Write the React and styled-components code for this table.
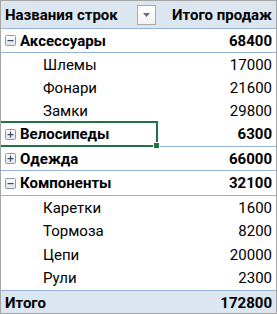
import styled, { createGlobalStyle } from 'styled-components';

const Global = createGlobalStyle`
  html, body {
    margin: 0;
    padding: 0;
    background: #fff;
  }
`;

const Sheet = styled.div`
  width: 277px;
  height: 314px;
  box-sizing: border-box;
  border: 1px solid #a6a6a6;
  font-family: Roboto, 'Noto Sans', sans-serif;
  font-size: 15px;
  color: #000;
  display: flex;
  flex-direction: column;
  overflow: hidden;
`;

const Row = styled.div`
  display: grid;
  grid-template-columns: 156px 1fr;
  height: ${(p) => p.$h}px;
  flex-shrink: 0;
  box-sizing: border-box;
  background: ${(p) => (p.$fill ? '#dce6f1' : '#fff')};
  border-top: ${(p) => (p.$lineTop ? '1px solid #95b3d7' : 'none')};
  border-bottom: ${(p) => (p.$line ? '1px solid #95b3d7' : 'none')};
  font-weight: ${(p) => (p.$bold ? 700 : 400)};
`;

const Label = styled.div`
  position: relative;
  display: flex;
  align-items: center;
  gap: 4px;
  padding-left: ${(p) => p.$indent}px;
  white-space: nowrap;
`;

const Value = styled.div`
  display: flex;
  align-items: center;
  justify-content: flex-end;
  padding-right: 4px;
  white-space: nowrap;
`;

const HeaderLabel = styled(Label)`
  justify-content: space-between;
  padding-right: 1px;
`;

const DropButton = styled.div`
  width: 19px;
  height: 20px;
  box-sizing: border-box;
  border: 1px solid #ababab;
  background: linear-gradient(#ffffff, #f2f2f2);
  display: flex;
  align-items: center;
  justify-content: center;
`;

const Selection = styled.div`
  position: absolute;
  left: -2px;
  top: -1px;
  right: -1px;
  bottom: -1px;
  border: 2px solid #217346;
  pointer-events: none;
`;

const Handle = styled.div`
  position: absolute;
  right: -4px;
  bottom: -4px;
  width: 5px;
  height: 5px;
  background: #217346;
  border: 1px solid #fff;
`;

const Toggle = ({ open }) => (
  <svg width="11" height="11" viewBox="0 0 11 11">
    <defs>
      <linearGradient id={open ? 'tg1' : 'tg2'} x1="0" y1="0" x2="0" y2="1">
        <stop offset="0" stopColor="#ffffff" />
        <stop offset="1" stopColor="#dde3ec" />
      </linearGradient>
    </defs>
    <rect x="0.5" y="0.5" width="10" height="10" rx="1" fill={`url(#${open ? 'tg1' : 'tg2'})`} stroke="#8d9aae" />
    <rect x="2.5" y="5" width="6" height="1.2" fill="#3c4b62" />
    {!open && <rect x="4.9" y="2.6" width="1.2" height="6" fill="#3c4b62" />}
  </svg>
);

const rows = [
  { name: 'Аксессуары', value: 68400, group: true, open: true, h: 24 },
  { name: 'Шлемы', value: 17000, h: 23 },
  { name: 'Фонари', value: 21600, h: 23 },
  { name: 'Замки', value: 29800, h: 23 },
  { name: 'Велосипеды', value: 6300, group: true, open: false, h: 25, selected: true },
  { name: 'Одежда', value: 66000, group: true, open: false, h: 24 },
  { name: 'Компоненты', value: 32100, group: true, open: true, h: 25 },
  { name: 'Каретки', value: 1600, h: 23 },
  { name: 'Тормоза', value: 8200, h: 24 },
  { name: 'Цепи', value: 20000, h: 23 },
  { name: 'Рули', value: 2300, h: 24 },
];

export default function App() {
  return (
    <>
      <Global />
      <Sheet>
        <Row $h={28} $fill $bold $line>
          <HeaderLabel $indent={4}>
            Названия строк
            <DropButton>
              <svg width="7" height="4" viewBox="0 0 7 4">
                <path d="M0 0 H7 L3.5 4 Z" fill="#6d6d6d" />
              </svg>
            </DropButton>
          </HeaderLabel>
          <Value>Итого продаж</Value>
        </Row>
        {rows.map((r) => (
          <Row key={r.name} $h={r.h} $bold={r.group} $line={r.group}>
            <Label $indent={r.group ? 4 : 42}>
              {r.group && <Toggle open={r.open} />}
              {r.name}
              {r.selected && (
                <Selection>
                  <Handle />
                </Selection>
              )}
            </Label>
            <Value>{r.value}</Value>
          </Row>
        ))}
        <Row $h={24} $fill $bold $lineTop>
          <Label $indent={4}>Итого</Label>
          <Value>172800</Value>
        </Row>
      </Sheet>
    </>
  );
}
